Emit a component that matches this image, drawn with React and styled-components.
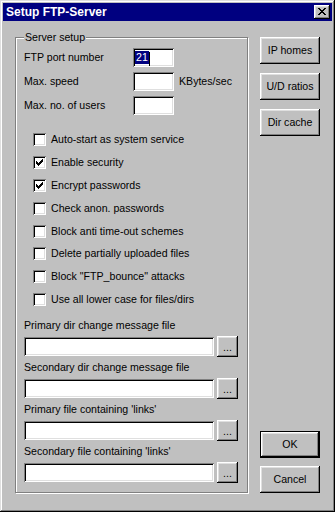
import React from "react";
import styled, { createGlobalStyle } from "styled-components";

const GlobalStyle = createGlobalStyle`
  html, body {
    margin: 0;
    padding: 0;
    background: #c0c0c0;
  }
  body {
    font-family: "Liberation Sans", Arial, sans-serif;
    font-size: 10.6px;
    color: #000;
  }
  * {
    box-sizing: border-box;
  }
`;

const raised = `
  box-shadow: inset -1px -1px #000, inset 1px 1px #fff,
    inset -2px -2px #808080, inset 2px 2px #dfdfdf;
`;

const sunken = `
  box-shadow: inset 1px 1px #808080, inset -1px -1px #fff,
    inset 2px 2px #000, inset -2px -2px #dfdfdf;
`;

const settings = [
  { label: "Auto-start as system service", checked: false },
  { label: "Enable security", checked: true },
  { label: "Encrypt passwords", checked: true },
  { label: "Check anon. passwords", checked: false },
  { label: "Block anti time-out schemes", checked: false },
  { label: "Delete partially uploaded files", checked: false },
  { label: 'Block "FTP_bounce" attacks', checked: false },
  { label: "Use all lower case for files/dirs", checked: false },
];

const files = [
  "Primary dir change message file",
  "Secondary dir change message file",
  "Primary file containing 'links'",
  "Secondary file containing 'links'",
];

const CheckMark = () => (
  <svg width="7" height="7" viewBox="0 0 7 7" shapeRendering="crispEdges">
    <path
      fill="#000"
      d="M6 0h1v1h-1z M5 1h2v1h-2z M0 2h1v1h-1z M4 2h3v1h-3z M0 3h2v1h-2z M3 3h3v1h-3z M0 4h5v1h-5z M1 5h3v1h-3z M2 6h1v1h-1z"
    />
  </svg>
);

const CloseGlyph = () => (
  <svg width="8" height="7" viewBox="0 0 8 7" shapeRendering="crispEdges">
    <path
      fill="#000"
      d="M0 0h2v1h-2z M6 0h2v1h-2z M1 1h2v1h-2z M5 1h2v1h-2z M2 2h4v1h-4z M3 3h2v1h-2z M2 4h4v1h-4z M1 5h2v1h-2z M5 5h2v1h-2z M0 6h2v1h-2z M6 6h2v1h-2z"
    />
  </svg>
);

const App = () => {
  return (
    <>
      <GlobalStyle />
      <Window>
        <TitleBar>
          <Title>Setup FTP-Server</Title>
          <CloseButton>
            <CloseGlyph />
          </CloseButton>
        </TitleBar>
        <Body>
          <GroupBox>
            <Legend>Server setup</Legend>
            <Fields>
              <FieldRow>
                <FieldLabel>FTP port number</FieldLabel>
                <Field $width={41}>
                  <Selected>21</Selected>
                  <Caret />
                </Field>
              </FieldRow>
              <FieldRow>
                <FieldLabel>Max. speed</FieldLabel>
                <Field $width={41} />
                <Unit>KBytes/sec</Unit>
              </FieldRow>
              <FieldRow>
                <FieldLabel>Max. no. of users</FieldLabel>
                <Field $width={41} />
              </FieldRow>
            </Fields>
            <CheckList>
              {settings.map((s) => (
                <CheckRow key={s.label}>
                  <CheckBox>{s.checked && <CheckMark />}</CheckBox>
                  <span>{s.label}</span>
                </CheckRow>
              ))}
            </CheckList>
            <FileList>
              {files.map((f) => (
                <FileBlock key={f}>
                  <TextLine>{f}</TextLine>
                  <FileRow>
                    <Field />
                    <BrowseButton>...</BrowseButton>
                  </FileRow>
                </FileBlock>
              ))}
            </FileList>
          </GroupBox>
          <ButtonColumn>
            <PushButton>IP homes</PushButton>
            <PushButton>U/D ratios</PushButton>
            <PushButton>Dir cache</PushButton>
            <BottomButtons>
              <PushButton $default>OK</PushButton>
              <PushButton>Cancel</PushButton>
            </BottomButtons>
          </ButtonColumn>
        </Body>
      </Window>
    </>
  );
};

const Window = styled.div`
  width: 335px;
  height: 512px;
  padding: 3px;
  background: #c0c0c0;
  display: flex;
  flex-direction: column;
  box-shadow: inset -1px -1px #000, inset 1px 1px #dfdfdf,
    inset -2px -2px #808080, inset 2px 2px #fff;
`;

const TitleBar = styled.div`
  height: 18px;
  background: #000080;
  display: flex;
  align-items: center;
  justify-content: space-between;
  padding: 0 2px 0 3px;
`;

const Title = styled.div`
  color: #fff;
  font-weight: bold;
  font-size: 12px;
  line-height: 14px;
`;

const CloseButton = styled.div`
  width: 16px;
  height: 14px;
  background: #c0c0c0;
  display: flex;
  align-items: center;
  justify-content: center;
  padding-bottom: 1px;
  ${raised}
`;

const Body = styled.div`
  flex: 1;
  display: flex;
  gap: 12px;
  padding: 10px 12px 16px 12px;
`;

const GroupBox = styled.fieldset`
  width: 233px;
  min-width: 0;
  margin: 0;
  padding: 4px 9px 8px 8px;
  border: 1px solid #808080;
  box-shadow: 1px 1px 0 #fff, inset 1px 1px 0 #fff;
  display: flex;
  flex-direction: column;
`;

const Legend = styled.legend`
  padding: 0 1px;
  line-height: 13px;
  background: #c0c0c0;
`;

const Fields = styled.div`
  display: flex;
  flex-direction: column;
  gap: 5px;
`;

const FieldRow = styled.div`
  display: flex;
  align-items: center;
  height: 19px;
`;

const FieldLabel = styled.span`
  width: 109px;
  line-height: 13px;
`;

const Field = styled.div`
  width: ${(p) => (p.$width ? `${p.$width}px` : "auto")};
  flex: ${(p) => (p.$width ? "none" : "1")};
  height: 19px;
  background: #fff;
  display: flex;
  align-items: center;
  padding: 0 2px;
  ${sunken}
`;

const Selected = styled.span`
  background: #000080;
  color: #fff;
  line-height: 13px;
  padding: 0 1px;
`;

const Caret = styled.span`
  width: 1px;
  height: 14px;
  background: #000;
  margin-top: 2px;
`;

const Unit = styled.span`
  margin-left: 5px;
  line-height: 13px;
`;

const CheckList = styled.div`
  display: flex;
  flex-direction: column;
  margin-top: 13px;
  padding-left: 9px;
`;

const CheckRow = styled.div`
  display: flex;
  align-items: center;
  gap: 5px;
  height: 22.9px;
  line-height: 13px;
`;

const CheckBox = styled.div`
  width: 13px;
  height: 13px;
  background: #fff;
  display: flex;
  align-items: center;
  justify-content: center;
  ${sunken}
`;

const FileList = styled.div`
  display: flex;
  flex-direction: column;
  gap: 4px;
  margin-top: 8px;
`;

const FileBlock = styled.div`
  display: flex;
  flex-direction: column;
  gap: 4px;
`;

const TextLine = styled.div`
  line-height: 13px;
`;

const FileRow = styled.div`
  display: flex;
  align-items: center;
  gap: 3px;
  height: 21px;
`;

const BrowseButton = styled.div`
  width: 21px;
  height: 21px;
  display: flex;
  align-items: flex-end;
  justify-content: center;
  padding-bottom: 5px;
  line-height: 10px;
  ${raised}
`;

const ButtonColumn = styled.div`
  width: 60px;
  display: flex;
  flex-direction: column;
  gap: 9px;
  padding-top: 6px;
`;

const BottomButtons = styled.div`
  margin-top: auto;
  display: flex;
  flex-direction: column;
  gap: 8px;
`;

const PushButton = styled.div`
  height: 27px;
  display: flex;
  align-items: center;
  justify-content: center;
  line-height: 13px;
  ${(p) =>
    p.$default
      ? `box-shadow: inset 0 0 0 1px #000, inset -2px -2px #000, inset 2px 2px #fff,
          inset -3px -3px #808080, inset 3px 3px #dfdfdf;`
      : raised}
`;

export default App;
